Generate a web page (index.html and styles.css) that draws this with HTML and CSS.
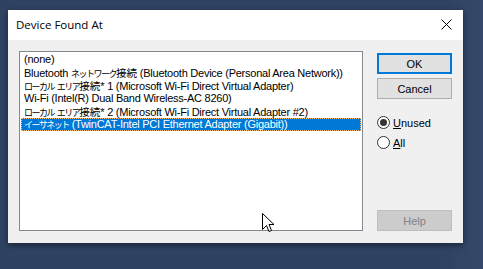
FILE: index.html
```html
<!DOCTYPE html>
<html>
<head>
<meta charset="utf-8">
<link rel="stylesheet" href="styles.css">
</head>
<body>
<div class="dialog">
  <div class="titlebar">
    <span class="title">Device Found At</span>
    <svg class="close" width="11" height="11" viewBox="0 0 11 11"><path d="M0.5 0.5 L10.5 10.5 M10.5 0.5 L0.5 10.5" stroke="#000" stroke-width="1" fill="none"/></svg>
  </div>
  <div class="content">
    <div class="listbox">
      <div class="item">(none)</div>
      <div class="item">Bluetooth <span class="kana">ネットワーク</span><span class="kanji">接続</span> (Bluetooth Device (Personal Area Network))</div>
      <div class="item"><span class="kana">ローカル</span> <span class="kana">エリア</span><span class="kanji">接続</span>* 1 (Microsoft Wi-Fi Direct Virtual Adapter)</div>
      <div class="item">Wi-Fi (Intel(R) Dual Band Wireless-AC 8260)</div>
      <div class="item"><span class="kana">ローカル</span> <span class="kana">エリア</span><span class="kanji">接続</span>* 2 (Microsoft Wi-Fi Direct Virtual Adapter #2)</div>
      <div class="item selected"><span class="kana">イーサネット</span> (TwinCAT-Intel PCI Ethernet Adapter (Gigabit))</div>
    </div>
    <div class="side">
      <div class="btn default">OK</div>
      <div class="btn">Cancel</div>
      <div class="radios">
        <div class="radio"><span class="dot checked"></span><span><u>U</u>nused</span></div>
        <div class="radio"><span class="dot"></span><span><u>A</u>ll</span></div>
      </div>
      <div class="btn disabled">Help</div>
    </div>
  </div>
</div>
<svg class="cursor" width="13" height="21" viewBox="0 0 13 21"><path d="M0.5 0.5 L0.5 16.5 L4.5 12.5 L7 18.5 L9.5 17.5 L7 11.5 L12 11.5 Z" fill="#fff" stroke="#000" stroke-width="1" stroke-linejoin="miter"/></svg>
</body>
</html>
```

FILE: styles.css
```css
html, body {
  margin: 0;
  padding: 0;
}
body {
  width: 483px;
  height: 269px;
  background: linear-gradient(90deg, #2f4262 0%, #2f4262 92%, #34496a 100%);
  overflow: hidden;
  position: relative;
  font-family: "Liberation Sans", "Noto Sans CJK JP", sans-serif;
}
.dialog {
  position: relative;
  margin: 10px 0 0 8px;
  width: 455px;
  height: 233px;
  background: #f0f0f0;
  box-shadow: 0 2px 6px rgba(0,0,0,0.45);
  display: flex;
  flex-direction: column;
}
.titlebar {
  height: 30px;
  background: #ffffff;
  display: flex;
  align-items: center;
  justify-content: space-between;
  padding: 0 11px 0 8px;
}
.title {
  font-family: "Open Sans", "Noto Sans", sans-serif;
  font-size: 11.5px;
  color: #000;
  margin-top: -1px;
}
.close {
  display: block;
  margin-top: -1px;
}
.content {
  display: flex;
  padding: 11px 0 0 11px;
}
.listbox {
  box-sizing: border-box;
  width: 344px;
  height: 180px;
  border: 1px solid #828790;
  background: #fff;
  padding: 0 1px;
}
.item {
  height: 13px;
  line-height: 13px;
  font-size: 11px;
  letter-spacing: -0.25px;
  color: #000;
  padding-left: 3px;
  white-space: nowrap;
  overflow: hidden;
}
.item:first-child {
  margin-top: 1px;
}
.item.selected {
  background: #0078d7;
  color: #fff;
  outline: 1px dotted #ffbf6a;
  outline-offset: -1px;
}
.kana {
  font-family: "Noto Sans CJK JP", sans-serif;
  font-size: 9px;
  letter-spacing: -1.5px;
}
.kanji {
  font-family: "Noto Sans CJK JP", sans-serif;
  font-size: 10.5px;
  letter-spacing: 0;
}
.side {
  margin-left: 14px;
  height: 180px;
  display: flex;
  flex-direction: column;
  padding-top: 2px;
  box-sizing: border-box;
}
.btn {
  box-sizing: border-box;
  width: 75px;
  height: 21px;
  background: #e1e1e1;
  border: 1px solid #adadad;
  font-size: 11px;
  display: flex;
  align-items: center;
  justify-content: center;
  color: #000;
}
.btn + .btn {
  margin-top: 4px;
}
.btn.default {
  border: 2px solid #0078d7;
}
.btn.disabled {
  margin-top: auto;
  background: #cccccc;
  border-color: #bfbfbf;
  color: #838383;
}
.radios {
  margin-top: 17px;
  display: flex;
  flex-direction: column;
  gap: 7px;
}
.radio {
  display: flex;
  align-items: center;
  height: 13px;
  font-size: 11px;
  color: #000;
  gap: 3px;
}
.dot {
  box-sizing: border-box;
  width: 13px;
  height: 13px;
  border-radius: 50%;
  border: 1px solid #333;
  background: #fff;
  position: relative;
  flex: none;
}
.dot.checked::after {
  content: "";
  position: absolute;
  left: 2px;
  top: 2px;
  width: 7px;
  height: 7px;
  border-radius: 50%;
  background: #333;
}
.cursor {
  position: absolute;
  left: 262px;
  top: 213px;
}
```
